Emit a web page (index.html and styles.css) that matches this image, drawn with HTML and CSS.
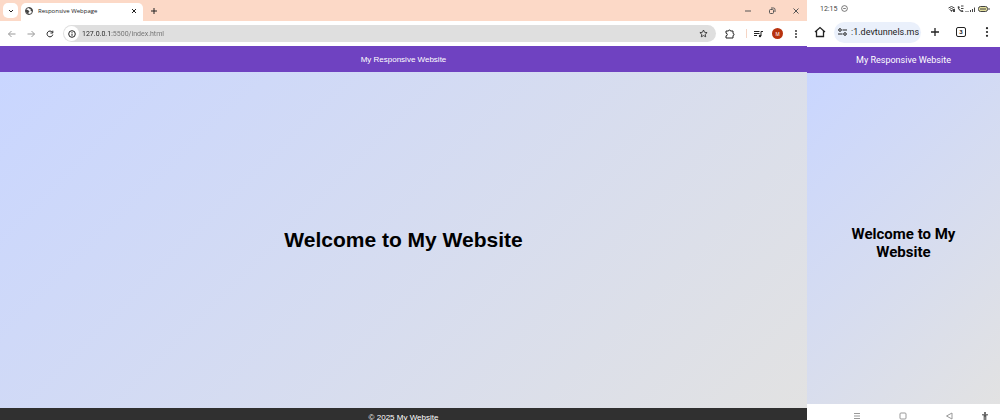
FILE: index.html
```html
<!DOCTYPE html>
<html lang="en">
<head>
    <meta charset="UTF-8">
    <meta name="viewport" content="width=device-width, initial-scale=1.0">
    <title>Responsive Webpage</title>
    <link rel="stylesheet" href="styles.css">
</head>
<body>

    <section class="desktop">
        <div class="tab-bar">
            <button type="button" class="tab-search" aria-label="Search tabs">
                <svg width="6" height="6" viewBox="0 0 6 6"><path d="M1 2l2 2 2-2"/></svg>
            </button>
            <div class="tab">
                <svg class="globe" width="8" height="8" viewBox="0 0 16 16">
                    <circle cx="8" cy="8" r="7"/>
                    <path class="land" d="M2 5l4 1 3 3-2 2v4l-4-3-2-5zM8 1l1 3 3 1-1 3 4 1V5l-3-3z"/>
                </svg>
                <span>Responsive Webpage</span>
                <button type="button" aria-label="Close tab">
                    <svg width="6" height="6" viewBox="0 0 6 6"><path d="M1 1l4 4M5 1L1 5"/></svg>
                </button>
            </div>
            <button type="button" class="new-tab" aria-label="New tab">
                <svg width="8" height="8" viewBox="0 0 8 8"><path d="M4 1v6M1 4h6"/></svg>
            </button>
            <div class="window-buttons">
                <button type="button" aria-label="Minimize"><svg width="8" height="8" viewBox="0 0 8 8"><path d="M1 4h6"/></svg></button>
                <button type="button" aria-label="Restore"><svg width="8" height="8" viewBox="0 0 8 8"><rect x="1.5" y="2.5" width="4" height="4" rx="1"/><path d="M3 1h2.500q1.500 0 1.500 1.500v2.500"/></svg></button>
                <button type="button" aria-label="Close"><svg width="8" height="8" viewBox="0 0 8 8"><path d="M1.500 1.500l5 5M6.500 1.500l-5 5"/></svg></button>
            </div>
        </div>

        <div class="toolbar">
            <button type="button" class="muted" aria-label="Back"><svg width="8" height="8" viewBox="0 0 8 8"><path d="M7.500 4h-7M3.500 1l-3 3 3 3"/></svg></button>
            <button type="button" class="muted" aria-label="Forward"><svg width="8" height="8" viewBox="0 0 8 8"><path d="M.5 4h7M4.500 1l3 3-3 3"/></svg></button>
            <button type="button" aria-label="Reload"><svg width="8" height="8" viewBox="0 0 8 8"><path d="M6.800 4.600A2.900 2.900 0 1 1 6.300 2.200M6.800.7v2.300H4.500"/></svg></button>
            <div class="address">
                <button type="button" class="site-info" aria-label="Site information"><svg width="8" height="8" viewBox="0 0 8 8"><circle cx="4" cy="4" r="3.300"/><path d="M4 3.600v2.200M4 2v.8"/></svg></button>
                <input type="text" value="127.0.0.1:5500/index.html" aria-label="Address">
                <button type="button" aria-label="Bookmark"><svg class="thin" width="9" height="9" viewBox="0 0 9 9"><path d="M4.500 1l1.100 2.300 2.500.3-1.900 1.700.5 2.500-2.200-1.200-2.200 1.200.5-2.500L.9 3.600l2.500-.3z"/></svg></button>
            </div>
            <button type="button" aria-label="Extensions"><svg width="10" height="10" viewBox="0 0 10 10"><path d="M1 2h2.500a1 1 0 0 1 2 0H8v2.500a1 1 0 0 1 0 2V9H1V6.800a1.300 1.300 0 0 0 0-2.600z"/></svg></button>
            <span class="divider"></span>
            <button type="button" aria-label="Media controls"><svg width="9" height="8" viewBox="0 0 9 8"><path d="M0 1.500h5.500M0 3.500h5.500M0 5.500h3M7 6V1.500h2"/><circle class="solid" cx="6" cy="6" r="1.200"/></svg></button>
            <button type="button" class="avatar" aria-label="Profile">M</button>
            <button type="button" aria-label="Menu"><svg width="8" height="8" viewBox="0 0 8 8"><g class="solid"><circle cx="4" cy="1" r=".9"/><circle cx="4" cy="4" r=".9"/><circle cx="4" cy="7" r=".9"/></g></svg></button>
        </div>

        <header>My Responsive Website</header>
        <main class="page">
            <h1>Welcome to My Website</h1>
        </main>
        <footer>© 2025 My Website</footer>
    </section>

    <section class="phone">
        <div class="status-bar">
            <span>12:15</span>
            <svg class="thin" width="7" height="7" viewBox="0 0 8 8"><circle cx="4" cy="4" r="3.300"/><path d="M2.500 4h3"/></svg>
            <svg class="signal" width="42" height="8" viewBox="0 0 42 8">
                <path d="M.5 3q3-3 6 0M1.500 4.500q2-2 4 0"/>
                <path class="solid" d="M2 5h3L3.500 7zM5 4h2v3H5z"/>
                <path class="solid" d="M10 1l2 1-1 1.500 2 2L14.500 5l1 1.500Q14 8 11.500 5.500T10 1z"/>
                <path d="M13 1h2.500M13 3.500h2.500"/>
                <path d="M18 6v1M20 6v1M22.500 5v2M24.500 4v3M26.500 2.500V7" />
                <rect class="battery" x="30.500" y="1.500" width="9" height="5" rx="2"/>
                <path d="M33 3v2M35 3v2M37 3v2M41 3v2"/>
            </svg>
        </div>

        <div class="phone-toolbar">
            <button type="button" aria-label="Home"><svg width="12" height="12" viewBox="0 0 12 12"><path d="M1 6l5-4.500L11 6M2.500 5v5.500h7V5"/></svg></button>
            <div class="phone-address">
                <svg width="9" height="8" viewBox="0 0 9 8"><path d="M4.500 2H9M0 6h4.500"/><circle cx="2" cy="2" r="1.300"/><circle cx="7" cy="6" r="1.300"/></svg>
                <input type="text" value=":1.devtunnels.ms" aria-label="Phone address">
            </div>
            <button type="button" aria-label="New tab"><svg width="10" height="10" viewBox="0 0 10 10"><path d="M5 1v8M1 5h8"/></svg></button>
            <button type="button" aria-label="Open tabs"><span class="tab-count">3</span></button>
            <button type="button" aria-label="Menu"><svg width="10" height="10" viewBox="0 0 10 10"><g class="solid"><circle cx="5" cy="1.200" r="1.100"/><circle cx="5" cy="5" r="1.100"/><circle cx="5" cy="8.800" r="1.100"/></g></svg></button>
        </div>

        <header>My Responsive Website</header>
        <main class="page">
            <h1>Welcome to My Website</h1>
        </main>
        <nav class="phone-nav">
            <button type="button" aria-label="Recent apps"><svg width="8" height="8" viewBox="0 0 8 8"><path d="M1 1.500h6M1 4h6M1 6.500h6"/></svg></button>
            <button type="button" aria-label="Home screen"><svg width="8" height="8" viewBox="0 0 8 8"><rect x="1" y="1" width="6" height="6" rx="1"/></svg></button>
            <button type="button" aria-label="Back"><svg width="8" height="8" viewBox="0 0 8 8"><path d="M7 1v6L1.500 4z"/></svg></button>
            <button type="button" class="person" aria-label="Accessibility"><svg width="8" height="8" viewBox="0 0 8 8"><circle class="solid" cx="4" cy="1" r="1"/><path d="M1 2.800h6M4 2.500v2.500M3.200 3v5M4.800 3v5"/></svg></button>
        </nav>
    </section>

</body>
</html>
```

FILE: styles.css
```css
* {
    box-sizing: border-box;
}

body {
    margin: 0;
    height: 100vh;
    display: flex;
    overflow: hidden;
    background: white;
    color: #222;
    font-family: "Liberation Sans", Arial, sans-serif;
}

button, input {
    margin: 0;
    padding: 0;
    border: none;
    background: none;
    color: inherit;
    font: inherit;
}

button {
    display: flex;
    flex-shrink: 0;
    align-items: center;
    justify-content: center;
}

input {
    flex: 1;
    min-width: 0;
}

svg {
    display: block;
    flex-shrink: 0;
    fill: none;
    stroke: currentColor;
    stroke-width: 1;
}

.solid, .land {
    fill: currentColor;
    stroke: none;
}

.thin {
    stroke-width: 0.8;
}

/* desktop browser */
.desktop, .phone {
    min-width: 0;
    display: flex;
    flex-direction: column;
}

.desktop {
    flex: 807;
}

.tab-bar {
    height: 21px;
    padding-left: 3px;
    display: flex;
    align-items: center;
    flex-shrink: 0;
    background: #fcd9c7;
}

.tab-search {
    width: 15px;
    height: 15px;
    border-radius: 5px;
    background: white;
}

.tab {
    align-self: flex-end;
    width: 122px;
    height: 18px;
    margin-left: 3px;
    padding: 0 6px 2px 4px;
    display: flex;
    align-items: center;
    gap: 5px;
    border-radius: 5px 5px 0 0;
    background: white;
    font-family: "Open Sans", sans-serif;
    font-size: 6px;
}

.tab span {
    flex: 1;
    white-space: nowrap;
}

.globe {
    color: #444;
    stroke-width: 2;
}

.new-tab {
    margin-left: 7px;
}

.window-buttons {
    margin-left: auto;
    padding-right: 7px;
    display: flex;
    gap: 16px;
    color: #555;
}

.toolbar {
    height: 25px;
    padding: 0 7px 0 8px;
    display: flex;
    align-items: center;
    flex-shrink: 0;
    gap: 11px;
    background: white;
}

.muted {
    color: #999;
}

.address {
    flex: 1;
    height: 17px;
    margin: 0 -2px;
    padding: 0 8px 0 1px;
    display: flex;
    align-items: center;
    gap: 3px;
    border-radius: 9px;
    background: #dfdfdf;
    font-family: Roboto, sans-serif;
    font-size: 7px;
}

/* host is darker than the port and path */
.address input {
    background: linear-gradient(90deg, #222 30px, #707070 30px);
    background-clip: text;
    -webkit-background-clip: text;
    color: transparent;
}

.site-info {
    width: 15px;
    height: 15px;
    border-radius: 50%;
    background: white;
}

.divider {
    width: 1px;
    height: 9px;
    margin: 0 -4px 0 0;
    background: #f5d5c5;
}

.avatar {
    width: 11px;
    height: 11px;
    margin: 0 -2px;
    border-radius: 50%;
    background: #b8320e;
    color: white;
    font-size: 5px;
}

/* the website */
header {
    height: 26px;
    display: flex;
    align-items: center;
    justify-content: center;
    flex-shrink: 0;
    background: #6f42c1;
    color: white;
    font-size: 8px;
}

.page {
    flex: 1;
    display: flex;
    align-items: center;
    justify-content: center;
    background: linear-gradient(135deg, #c9d6ff, #e2e2e2);
    color: black;
    text-align: center;
}

.page h1 {
    margin: 0;
    font-size: 21px;
    line-height: 24px;
}

footer {
    height: 12px;
    padding-top: 5px;
    flex-shrink: 0;
    overflow: hidden;
    background: #303030;
    color: white;
    font-size: 8px;
    line-height: 10px;
    text-align: center;
}

/* phone browser */
.phone {
    flex: 193;
    font-family: Roboto, sans-serif;
}

.status-bar {
    height: 17px;
    padding: 0 10px 0 13px;
    display: flex;
    align-items: center;
    flex-shrink: 0;
    gap: 4px;
    font-size: 7px;
    color: #444;
}

.signal {
    margin-left: auto;
}

.battery {
    fill: #e3df9c;
}

.phone-toolbar {
    height: 30px;
    padding: 0 7px;
    display: flex;
    align-items: center;
    flex-shrink: 0;
    gap: 8px;
}

.phone-toolbar > button {
    width: 12px;
}

.phone-toolbar > button + button {
    margin-left: 6px;
}

.phone-toolbar > button svg {
    stroke-width: 1.3;
}

.phone-address {
    flex: 1;
    min-width: 0;
    height: 21px;
    padding: 0 2px 0 4px;
    display: flex;
    align-items: center;
    gap: 4px;
    border-radius: 11px;
    background: #eaf0fb;
    font-size: 9px;
}

.tab-count {
    width: 10px;
    height: 10px;
    border: 1px solid #222;
    border-radius: 2px;
    font-size: 6px;
    font-weight: bold;
    line-height: 8px;
    text-align: center;
}

.phone header {
    font-size: 9px;
}

.phone .page {
    padding: 8px 32px 0;
}

.phone .page h1 {
    font-size: 15px;
    line-height: 18px;
}

.phone-nav {
    height: 16px;
    padding: 8px 11px 0 46px;
    display: flex;
    align-items: center;
    flex-shrink: 0;
    gap: 38px;
    color: #999;
}

.person {
    margin-left: -10px;
    color: #444;
}
```
